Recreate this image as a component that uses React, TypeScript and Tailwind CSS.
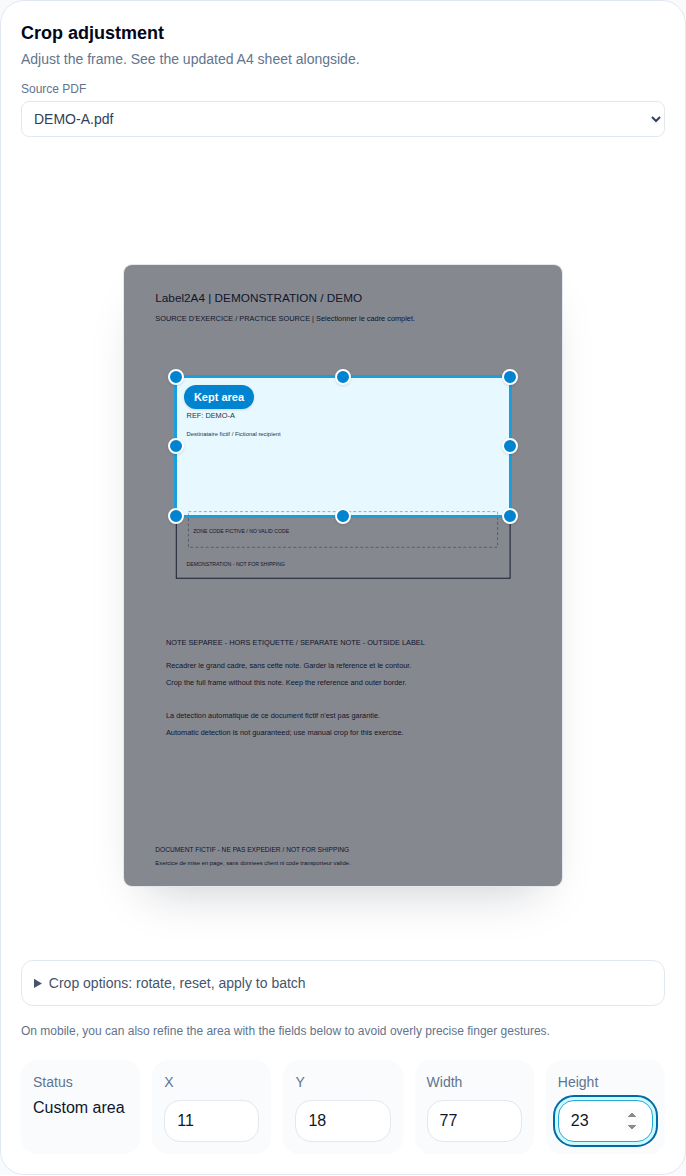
import { useState } from "react";

interface CropArea {
  x: number;
  y: number;
  width: number;
  height: number;
}

interface DocumentLine {
  x: number;
  y: number;
  size: number;
  text: string;
}

// positions are in PDF points, A4 portrait
const documentLines: DocumentLine[] = [
  { x: 42.5, y: 50, size: 16, text: "Label2A4 | DEMONSTRATION / DEMO" },
  {
    x: 42.5,
    y: 76,
    size: 10,
    text: "SOURCE D'EXERCICE / PRACTICE SOURCE | Selectionner le cadre complet.",
  },
  { x: 85, y: 208, size: 10, text: "REF: DEMO-A" },
  { x: 85, y: 232, size: 8, text: "Destinataire fictif / Fictional recipient" },
  { x: 94, y: 364, size: 7, text: "ZONE CODE FICTIVE / NO VALID CODE" },
  { x: 85, y: 409, size: 7, text: "DEMONSTRATION - NOT FOR SHIPPING" },
  {
    x: 57,
    y: 516,
    size: 10,
    text: "NOTE SEPAREE - HORS ETIQUETTE / SEPARATE NOTE - OUTSIDE LABEL",
  },
  {
    x: 57,
    y: 548,
    size: 10,
    text: "Recadrer le grand cadre, sans cette note. Garder la reference et le contour.",
  },
  {
    x: 57,
    y: 571,
    size: 10,
    text: "Crop the full frame without this note. Keep the reference and outer border.",
  },
  {
    x: 57,
    y: 616,
    size: 10,
    text: "La detection automatique de ce document fictif n'est pas garantie.",
  },
  {
    x: 57,
    y: 639,
    size: 10,
    text: "Automatic detection is not guaranteed; use manual crop for this exercise.",
  },
  {
    x: 42.5,
    y: 798,
    size: 9,
    text: "DOCUMENT FICTIF - NE PAS EXPEDIER / NOT FOR SHIPPING",
  },
  {
    x: 42.5,
    y: 815,
    size: 8,
    text: "Exercice de mise en page, sans donnees client ni code transporteur valide.",
  },
];

const handles = [
  { label: "Resize top left", position: "left-0 top-0" },
  { label: "Resize top", position: "left-1/2 top-0" },
  { label: "Resize top right", position: "left-full top-0" },
  { label: "Resize left", position: "left-0 top-1/2" },
  { label: "Resize right", position: "left-full top-1/2" },
  { label: "Resize bottom left", position: "left-0 top-full" },
  { label: "Resize bottom", position: "left-1/2 top-full" },
  { label: "Resize bottom right", position: "left-full top-full" },
];

const fields: { key: keyof CropArea; label: string }[] = [
  { key: "x", label: "X" },
  { key: "y", label: "Y" },
  { key: "width", label: "Width" },
  { key: "height", label: "Height" },
];

const DocumentPage = () => (
  <svg viewBox="0 0 595 843" className="block w-full" fill="#1e293b">
    <rect width="595" height="843" fill="#fff" />
    <rect
      x="71"
      y="152"
      width="453.5"
      height="273.5"
      fill="none"
      stroke="#1e293b"
      strokeWidth="1.3"
    />
    <rect
      x="87.5"
      y="335"
      width="420"
      height="48.5"
      fill="none"
      stroke="#64748b"
      strokeWidth="0.8"
      strokeDasharray="4 3"
    />
    {documentLines.map((line) => (
      <text key={line.text} x={line.x} y={line.y} fontSize={line.size}>
        {line.text}
      </text>
    ))}
  </svg>
);

const CropFrame = ({ area }: { area: CropArea }) => (
  <div
    className="absolute border-3 border-[#1a9fdc] bg-[#00aeff]/9 shadow-[0_0_0_9999px_rgba(2,6,23,0.48)]"
    style={{
      left: `${area.x}%`,
      top: `${area.y}%`,
      width: `${area.width}%`,
      height: `${area.height}%`,
    }}
  >
    <span className="absolute left-[7px] top-[7px] rounded-full bg-sky-600 px-2.5 py-1 text-[11px] leading-4 font-bold whitespace-nowrap text-white shadow-sm">
      Kept area
    </span>
  </div>
);

// kept outside the clipped page so a handle can hang over its edge
const CropHandles = ({ area }: { area: CropArea }) => (
  <div
    className="absolute border-2 border-transparent"
    style={{
      left: `${area.x}%`,
      top: `${area.y}%`,
      width: `${area.width}%`,
      height: `${area.height}%`,
    }}
  >
    {handles.map(({ label, position }) => (
      <button
        key={label}
        type="button"
        aria-label={label}
        className={`absolute size-4 -translate-1/2 rounded-full border-2 border-white bg-sky-600 shadow ${position}`}
      />
    ))}
  </div>
);

const App = () => {
  const [area, setArea] = useState<CropArea>({
    x: 11.4,
    y: 17.7,
    width: 77.2,
    height: 23,
  });

  return (
    <main className="bg-slate-50 font-['Liberation_Sans',Arial,sans-serif]">
      <section className="rounded-3xl border border-slate-200 bg-white p-5">
        <h2 className="text-lg leading-6 font-semibold text-slate-950">
          Crop adjustment
        </h2>
        <p className="mt-1 text-sm text-slate-500">
          Adjust the frame. See the updated A4 sheet alongside.
        </p>
        <label htmlFor="source" className="mt-3 block text-xs text-slate-500">
          Source PDF
        </label>
        <select
          id="source"
          className="mt-1 block h-9 w-full rounded-lg border border-slate-200 bg-white px-2 text-sm text-slate-700"
        >
          <option>DEMO-A.pdf</option>
        </select>

        <div className="flex justify-center pt-32 pb-[74px]">
          <div className="w-full max-w-[438px] rounded-lg shadow-[0_24px_48px_-24px_rgba(15,23,42,0.25)]">
            <div className="relative">
              <div className="relative overflow-hidden rounded-lg ring-1 ring-slate-200">
                <DocumentPage />
                <CropFrame area={area} />
              </div>
              <CropHandles area={area} />
            </div>
          </div>
        </div>

        <details className="rounded-xl border border-slate-200 px-3 py-3 text-sm text-slate-600">
          <summary className="cursor-pointer">
            Crop options: rotate, reset, apply to batch
          </summary>
        </details>
        <p className="mt-4 text-xs leading-[18px] text-slate-500">
          On mobile, you can also refine the area with the fields below to avoid
          overly precise finger gestures.
        </p>

        <div className="mt-5 grid grid-cols-2 gap-3 sm:grid-cols-5">
          <div className="rounded-2xl bg-slate-50/80 p-3">
            <p className="text-sm text-slate-500">Status</p>
            <p className="mt-1 text-base text-slate-900">Custom area</p>
          </div>
          {fields.map(({ key, label }) => (
            <div key={key} className="rounded-2xl bg-slate-50/80 p-3">
              <label htmlFor={key} className="block text-sm text-slate-500">
                {label}
              </label>
              <input
                id={key}
                type="number"
                autoFocus={key === "height"}
                value={Math.round(area[key])}
                onChange={(e) =>
                  setArea({ ...area, [key]: Number(e.target.value) })
                }
                className="mt-2 block w-full rounded-2xl border border-slate-200 bg-white px-3 py-2 text-base text-slate-900 focus:border-[#28a9d8] focus:ring-4 focus:ring-cyan-100 focus:outline-2 focus:outline-offset-3 focus:outline-sky-700"
              />
            </div>
          ))}
        </div>
      </section>
    </main>
  );
};

export default App;
